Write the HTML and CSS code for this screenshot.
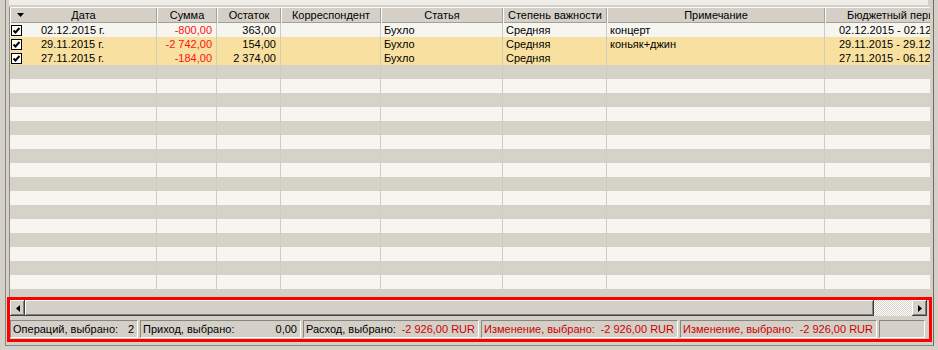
FILE: index.html
```html
<!DOCTYPE html>
<html>
<head>
    <meta charset="UTF-8">
    <title>Операции</title>
    <link rel="stylesheet" href="styles.css">
</head>
<body>
    <div class="frame">
        <div class="top"></div>
        <div class="grid">
            <table class="tbl">
                <colgroup>
                    <col style="width:147px"><col style="width:60px"><col style="width:64px"><col style="width:100px">
                    <col style="width:122px"><col style="width:104px"><col style="width:218px"><col style="width:170px">
                </colgroup>
                <thead>
                    <tr>
                        <th class="first">
                            <div class="hd">
                                <svg class="sort" width="7" height="4" viewBox="0 0 7 4"><path d="M0 0H7L3.5 4Z" fill="#000"/></svg>
                                <span>Дата</span>
                            </div>
                        </th>
                        <th>Сумма</th>
                        <th>Остаток</th>
                        <th>Корреспондент</th>
                        <th>Статья</th>
                        <th>Степень важности</th>
                        <th>Примечание</th>
                        <th class="budget">Бюджетный период</th>
                    </tr>
                </thead>
                <tbody>
                    <tr>
                        <td class="date"><span class="chk"><svg width="9" height="9" viewBox="0 0 9 9"><path d="M1.5 4.5L3.5 6.5L7.5 2" fill="none" stroke="#000" stroke-width="2"/></svg></span>02.12.2015 г.</td>
                        <td class="num neg">-800,00</td>
                        <td class="num">363,00</td>
                        <td></td>
                        <td>Бухло</td>
                        <td>Средняя</td>
                        <td>концерт</td>
                        <td class="period">02.12.2015 - 02.12.2015</td>
                    </tr>
                    <tr class="sel">
                        <td class="date"><span class="chk"><svg width="9" height="9" viewBox="0 0 9 9"><path d="M1.5 4.5L3.5 6.5L7.5 2" fill="none" stroke="#000" stroke-width="2"/></svg></span>29.11.2015 г.</td>
                        <td class="num neg">-2 742,00</td>
                        <td class="num">154,00</td>
                        <td></td>
                        <td>Бухло</td>
                        <td>Средняя</td>
                        <td>коньяк+джин</td>
                        <td class="period">29.11.2015 - 29.12.2015</td>
                    </tr>
                    <tr class="sel">
                        <td class="date"><span class="chk"><svg width="9" height="9" viewBox="0 0 9 9"><path d="M1.5 4.5L3.5 6.5L7.5 2" fill="none" stroke="#000" stroke-width="2"/></svg></span>27.11.2015 г.</td>
                        <td class="num neg">-184,00</td>
                        <td class="num">2 374,00</td>
                        <td></td>
                        <td>Бухло</td>
                        <td>Средняя</td>
                        <td></td>
                        <td class="period">27.11.2015 - 06.12.2015</td>
                    </tr>
                    <tr><td></td><td></td><td></td><td></td><td></td><td></td><td></td><td></td></tr>
                    <tr><td></td><td></td><td></td><td></td><td></td><td></td><td></td><td></td></tr>
                    <tr><td></td><td></td><td></td><td></td><td></td><td></td><td></td><td></td></tr>
                    <tr><td></td><td></td><td></td><td></td><td></td><td></td><td></td><td></td></tr>
                    <tr><td></td><td></td><td></td><td></td><td></td><td></td><td></td><td></td></tr>
                    <tr><td></td><td></td><td></td><td></td><td></td><td></td><td></td><td></td></tr>
                    <tr><td></td><td></td><td></td><td></td><td></td><td></td><td></td><td></td></tr>
                    <tr><td></td><td></td><td></td><td></td><td></td><td></td><td></td><td></td></tr>
                    <tr><td></td><td></td><td></td><td></td><td></td><td></td><td></td><td></td></tr>
                    <tr><td></td><td></td><td></td><td></td><td></td><td></td><td></td><td></td></tr>
                    <tr><td></td><td></td><td></td><td></td><td></td><td></td><td></td><td></td></tr>
                    <tr><td></td><td></td><td></td><td></td><td></td><td></td><td></td><td></td></tr>
                    <tr><td></td><td></td><td></td><td></td><td></td><td></td><td></td><td></td></tr>
                    <tr><td></td><td></td><td></td><td></td><td></td><td></td><td></td><td></td></tr>
                    <tr><td></td><td></td><td></td><td></td><td></td><td></td><td></td><td></td></tr>
                    <tr><td></td><td></td><td></td><td></td><td></td><td></td><td></td><td></td></tr>
                </tbody>
            </table>
        </div>
        <div class="bottom">
            <div class="hscroll">
                <div class="sb-btn"><svg width="4" height="7" viewBox="0 0 4 7"><path d="M4 0V7L0 3.5Z" fill="#000"/></svg></div>
                <div class="thumb"></div>
                <div class="track"></div>
                <div class="sb-btn"><svg width="4" height="7" viewBox="0 0 4 7"><path d="M0 0V7L4 3.5Z" fill="#000"/></svg></div>
            </div>
            <div class="status">
                <div class="panel p1"><span>Операций, выбрано:</span><span>2</span></div>
                <div class="panel p2"><span>Приход, выбрано:</span><span>0,00</span></div>
                <div class="panel p3"><span>Расход, выбрано:</span><span class="red">-2 926,00 RUR</span></div>
                <div class="panel p4 red"><span>Изменение, выбрано:</span><span>-2 926,00 RUR</span></div>
                <div class="panel p4 red"><span>Изменение, выбрано:</span><span>-2 926,00 RUR</span></div>
                <div class="panel p6"></div>
            </div>
        </div>
    </div>
</body>
</html>
```
FILE: styles.css
```css
body {
    margin: 0;
    width: 938px;
    height: 350px;
    overflow: hidden;
    background-color: #d4d0c8;
    font-family: "Liberation Sans", Arial, sans-serif;
    font-size: 11px;
    color: #000;
}
.frame {
    margin-left: 5px;
    width: 927px;
    height: 345px;
    border-left: 1px solid #8a877f;
    border-right: 1px solid #6f6c66;
    border-bottom: 1px solid #8a877f;
}
.top {
    height: 5px;
    margin: 0 5px 2px 3px;
    background-color: #eeede7;
}
.grid {
    margin-left: 3px;
    width: 920px;
    height: 290px;
    overflow: hidden;
    border-left: 1px solid #8e8b84;
}
.tbl {
    table-layout: fixed;
    border-collapse: collapse;
    width: 985px;
}
th {
    height: 16px;
    padding: 0;
    font-weight: normal;
    text-align: center;
    white-space: nowrap;
    overflow: hidden;
    background-color: #d4d0c8;
    box-shadow: inset 1px 1px #fbfaf6, inset -1px -1px #a3a098;
}
th.budget {
    text-align: left;
    padding-left: 22px;
}
.hd {
    display: grid;
    align-items: center;
}
.hd > * {
    grid-area: 1 / 1;
}
.sort {
    justify-self: start;
    margin-left: 7px;
}
td {
    height: 14px;
    padding: 0 3px;
    line-height: 14px;
    white-space: nowrap;
    overflow: hidden;
    box-shadow: inset -1px 0 #cfccc3;
}
tbody tr:nth-child(odd) {
    background-color: #f6f5ef;
}
tbody tr:nth-child(even) {
    background-color: #d5d3c8;
}
tbody tr.sel {
    background-color: #f8e0a0;
}
td.date {
    padding-left: 1px;
}
.chk {
    display: inline-flex;
    align-items: center;
    justify-content: center;
    width: 9px;
    height: 9px;
    margin-right: 19px;
    vertical-align: -1px;
    border: 1px solid #000;
    background-color: #fff;
}
td.num {
    text-align: right;
    padding-right: 5px;
}
.neg {
    color: #ff1010;
}
td.period {
    padding-left: 14px;
}
/* bottom block, outlined in red */
.bottom {
    margin-left: 1px;
    width: 919px;
    height: 39px;
    border: 3px solid #ff0000;
}
.hscroll {
    display: flex;
    width: 917px;
    height: 16px;
}
.sb-btn, .thumb {
    background-color: #d4d0c8;
    box-shadow: inset -1px -1px #404040, inset 1px 1px #fff, inset -2px -2px #808080;
}
.sb-btn {
    width: 15px;
    display: flex;
    align-items: center;
    justify-content: center;
}
.thumb {
    width: 849px;
}
.track {
    flex: 1;
    background: repeating-conic-gradient(#ffffff 0 25%, #d4d0c8 0 50%) 0 0 / 2px 2px;
}
.status {
    display: flex;
    gap: 2px;
    margin-top: 4px;
}
.panel {
    display: flex;
    justify-content: space-between;
    align-items: center;
    height: 16px;
    padding: 0 3px 0 2px;
    border: 1px solid;
    border-color: #8a877f #fff #fff #8a877f;
    white-space: nowrap;
}
.p1 { width: 121px; }
.p2 { width: 154px; }
.p3 { width: 169px; }
.p4 { width: 190px; }
.p6 { width: 39px; }
.red {
    color: #cc0000;
}
```
